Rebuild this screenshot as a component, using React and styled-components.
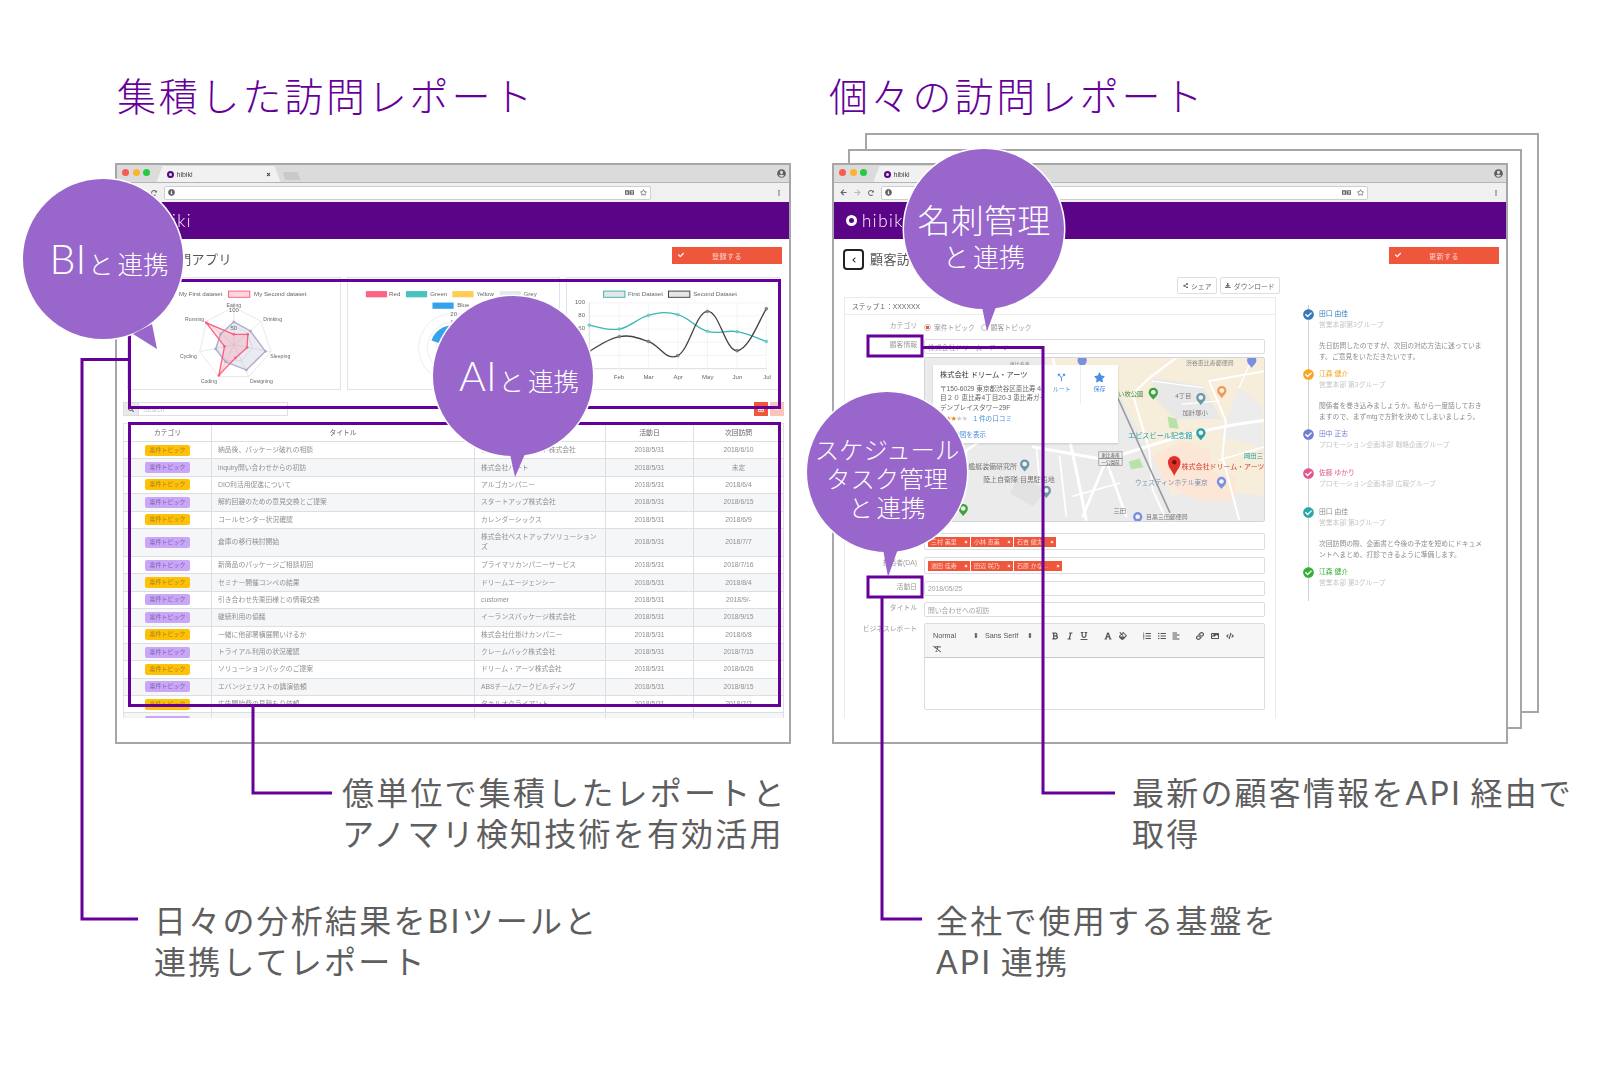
import React from "react";
import styled, { createGlobalStyle } from "styled-components";
import {
  FaArrowLeft,
  FaArrowRight,
  FaRedoAlt,
  FaInfoCircle,
  FaLanguage,
  FaRegStar,
  FaEllipsisV,
  FaUserCircle,
  FaCheck,
  FaShareAlt,
  FaDownload,
  FaSearch,
  FaChevronLeft,
  FaTimes,
  FaBold,
  FaItalic,
  FaUnderline,
  FaFont,
  FaFill,
  FaListOl,
  FaListUl,
  FaAlignLeft,
  FaLink,
  FaImage,
  FaCode,
  FaRemoveFormat,
  FaStar,
  FaCheckCircle,
  FaMinus,
  FaTable,
} from "react-icons/fa";
import { MdCallSplit } from "react-icons/md";

const PURPLE = "#660099";
const BRAND = "#5b0487";
const BUBBLE = "#9966cb";
const CORAL = "#ee573b";
const BIG_FONT = '"Lato", "Noto Sans CJK JP", sans-serif';
const APP_FONT = '"Liberation Sans", "Noto Sans CJK JP", sans-serif';

const GlobalStyle = createGlobalStyle`
  html, body {
    margin: 0;
    padding: 0;
    background: #fff;
  }
`;

const Page = styled.div`
  position: relative;
  width: 1600px;
  height: 1066px;
  overflow: hidden;
  background: #fff;
  font-family: ${BIG_FONT};
`;

const Columns = styled.div`
  display: grid;
  grid-template-columns: 717px 1fr;
  padding-left: 115px;
`;

const Column = styled.section`
  display: flex;
  flex-direction: column;
`;

const Heading = styled.h1`
  box-sizing: border-box;
  height: 163px;
  margin: 0 0 0 ${(p) => p.$shift || 0}px;
  padding: 74px 0 0 2px;
  font-size: 39px;
  line-height: 44px;
  font-weight: 300;
  letter-spacing: 2.8px;
  color: ${PURPLE};
`;

const WindowStack = styled.div`
  position: relative;
  isolation: isolate;
  width: 676px;
  height: 581px;
`;

const BackSheet = styled.div`
  position: absolute;
  z-index: -1;
  left: ${(p) => p.$left}px;
  top: ${(p) => p.$top}px;
  box-sizing: border-box;
  width: 674px;
  height: 580px;
  background: #fff;
  border: 2px solid #a6a6a9;
`;

const Window = styled.div`
  box-sizing: border-box;
  width: 676px;
  height: 581px;
  background: #fff;
  border: 2px solid #a6a6a9;
  font-family: ${APP_FONT};
  filter: blur(0.4px);
`;

const TitleBar = styled.div`
  position: relative;
  display: flex;
  align-items: flex-end;
  height: 17px;
  padding-left: 5px;
  background: #dbdbdb;
  border-bottom: 1px solid #b5b5b5;
`;

const Light = styled.span`
  width: 7px;
  height: 7px;
  margin: 0 3.5px 6px 0;
  border-radius: 50%;
  background: ${(p) => p.$color};
`;

const Tab = styled.div`
  display: flex;
  align-items: center;
  justify-content: space-between;
  box-sizing: border-box;
  width: 124px;
  height: 16px;
  margin-left: 3px;
  padding: 0 10px 0 10px;
  background: #f1f1f1;
  clip-path: polygon(0 100%, 6px 0, calc(100% - 6px) 0, 100% 100%);
  font-size: 7px;
  color: #444;
`;

const TabLabel = styled.span`
  display: flex;
  align-items: center;
  gap: 3px;
`;

const TabLogo = styled.span`
  box-sizing: border-box;
  width: 7px;
  height: 7px;
  border-radius: 50%;
  border: 2px solid ${BRAND};
  background: #ddd;
`;

const NewTab = styled.div`
  width: 18px;
  height: 8px;
  margin: 0 0 2px 2px;
  background: #c9c9c9;
  clip-path: polygon(3px 100%, 0 0, calc(100% - 3px) 0, 100% 100%);
`;

const Profile = styled.span`
  position: absolute;
  right: 3px;
  top: 4px;
  color: #5d5d5d;
  font-size: 9px;
  line-height: 0;
`;

const Toolbar = styled.div`
  display: flex;
  align-items: center;
  height: 19px;
  padding-left: 6px;
  background: #f0f0f0;
  color: #666;
  font-size: 7px;
`;

const NavButtons = styled.div`
  display: flex;
  align-items: center;
  gap: 7px;
  width: 41px;
`;

const AddressBar = styled.div`
  display: flex;
  align-items: center;
  justify-content: space-between;
  box-sizing: border-box;
  width: 487px;
  height: 14px;
  padding: 0 3px 0 3px;
  background: #fff;
  border: 1px solid #cfcfcf;
  border-radius: 2px;
`;

const AddressIcons = styled.span`
  display: flex;
  gap: 6px;
  align-items: center;
`;

const MenuDots = styled.span`
  margin-left: auto;
  margin-right: 7px;
  line-height: 0;
`;

const BrandBar = styled.div`
  display: flex;
  align-items: center;
  gap: 5px;
  height: 37px;
  padding-left: 12px;
  background: ${BRAND};
  color: #fff;
  font-family: ${BIG_FONT};
  font-weight: 300;
  font-size: 17px;
  letter-spacing: 1.5px;
`;

const LogoRing = styled.span`
  box-sizing: border-box;
  width: 11px;
  height: 11px;
  border-radius: 50%;
  border: 3.5px solid #fff;
  background: ${BRAND};
`;

const Viewport = styled.div`
  height: 479px;
  overflow: hidden;
`;

const PageHead = styled.div`
  display: flex;
  justify-content: space-between;
  align-items: flex-start;
  height: 30px;
  padding: 8px 7px 0 9px;
`;

const PageTitle = styled.div`
  display: flex;
  align-items: center;
  gap: 6px;
  height: 22px;
  margin-left: ${(p) => p.$inset || 0}px;
  font-size: 13px;
  letter-spacing: 0.4px;
  color: #555;
`;

const BackButton = styled.span`
  display: flex;
  align-items: center;
  justify-content: center;
  box-sizing: border-box;
  width: 21px;
  height: 21px;
  margin-top: 3px;
  border: 2px solid #222;
  border-radius: 4px;
  color: #222;
  font-size: 6px;
`;

const SubmitButton = styled.div`
  position: relative;
  display: flex;
  align-items: center;
  justify-content: center;
  width: 110px;
  height: 17px;
  background: ${CORAL};
  color: #fbd5cc;
  font-size: 7px;
  letter-spacing: 0.5px;
  svg {
    position: absolute;
    left: 6px;
    top: 5px;
    width: 6px;
    height: 6px;
    color: #fff;
  }
`;

const ListPane = styled.div`
  padding: 0 5px 0 6px;
`;

const ChartRow = styled.div`
  display: flex;
  gap: 6px;
  padding: 0 4px 0 4px;
`;

const ChartCard = styled.div`
  flex: 1;
  height: 113px;
  border: 1px solid #e2e2e8;
  box-sizing: border-box;
  svg {
    display: block;
    width: 100%;
    height: 100%;
  }
  text {
    font-family: ${APP_FONT};
    fill: #666;
  }
`;

const SearchRow = styled.div`
  display: flex;
  align-items: center;
  height: 14px;
  margin-top: 12px;
`;

const SearchAddon = styled.span`
  display: flex;
  align-items: center;
  justify-content: center;
  width: 16px;
  height: 14px;
  background: #e9e9ec;
  color: #666;
  font-size: 6px;
  border: 1px solid #ddd;
  box-sizing: border-box;
`;

const SearchInput = styled.span`
  box-sizing: border-box;
  width: 149px;
  height: 14px;
  padding: 2px 4px;
  border: 1px solid #dfdfe3;
  border-left: 0;
  font-size: 6.8px;
  line-height: 9px;
  color: #c8c8c8;
`;

const SquareButton = styled.span`
  display: flex;
  align-items: center;
  justify-content: center;
  width: 14px;
  height: 14px;
  margin-left: ${(p) => (p.$push ? "auto" : "2px")};
  background: ${(p) => (p.$soft ? "#f9c5ba" : CORAL)};
  color: #fff;
  font-size: 6px;
`;

const ReportTable = styled.table`
  width: 660px;
  margin-top: 7px;
  border-collapse: collapse;
  table-layout: fixed;
  font-size: 6.8px;
  line-height: 10px;
  color: #909090;
  border-top: 1px solid #e4e4e8;
  border-left: 1px solid #e4e4e8;

  th {
    height: 17px;
    font-weight: 400;
    color: #666;
    text-align: center;
    border-right: 1px solid #dcdee2;
    border-bottom: 1px solid #dcdee2;
    padding: 0;
  }
`;

const Row = styled.tr`
  background: ${(p) => (p.$striped ? "#f5f6f8" : "#fff")};
`;

const Cell = styled.td`
  height: ${(p) => (p.$tall ? 27 : 16.4)}px;
  padding: 0 6px;
  text-align: ${(p) => (p.$center ? "center" : "left")};
  border-right: 1px solid #dcdee2;
  border-bottom: 1px solid #dcdee2;
`;

const Badge = styled.span`
  display: inline-block;
  width: 45px;
  height: 11px;
  border-radius: 2px;
  line-height: 11px;
  font-size: 6px;
  text-align: center;
  vertical-align: middle;
  color: ${(p) => (p.$tone === "gold" ? "#a8801a" : "#7d66a8")};
  background: ${(p) => (p.$tone === "gold" ? "#ffc107" : "#c9a6f7")};
`;

const DetailLayout = styled.div`
  display: grid;
  grid-template-columns: 446px 1fr;
  padding-left: 10px;
`;

const ShareRow = styled.div`
  display: flex;
  justify-content: flex-end;
  gap: 3px;
  height: 20px;
  padding-right: 10px;
`;

const ShareButton = styled.span`
  display: flex;
  align-items: center;
  justify-content: center;
  gap: 3px;
  box-sizing: border-box;
  width: ${(p) => p.$width}px;
  height: 17px;
  background: #fff;
  border: 1px solid #dedede;
  border-radius: 2px;
  font-size: 6.8px;
  color: #666;
  svg {
    width: 5.5px;
    height: 5.5px;
  }
`;

const FormCard = styled.div`
  box-sizing: border-box;
  width: 432px;
  height: 430px;
  border: 1px solid #e9e9ee;
  border-bottom: 0;
`;

const FormHead = styled.div`
  box-sizing: border-box;
  height: 17px;
  padding: 4px 7px;
  border-bottom: 1px solid #ececf0;
  font-size: 6.8px;
  line-height: 9px;
  color: #666;
`;

const FormRow = styled.div`
  display: grid;
  grid-template-columns: 72px 341px;
  column-gap: 7px;
  margin-top: ${(p) => p.$gap}px;
`;

const FieldLabel = styled.span`
  padding-top: 1px;
  font-size: 6.8px;
  line-height: 10px;
  text-align: right;
  color: #9a9a9a;
`;

const Field = styled.div`
  box-sizing: border-box;
  display: flex;
  align-items: center;
  gap: 1px;
  height: ${(p) => p.$height}px;
  padding: 0 3px;
  border: 1px solid #dcdde2;
  border-radius: 2px;
  font-size: 6.8px;
  color: #a2a2a2;
`;

const RadioGroup = styled.div`
  display: flex;
  align-items: center;
  gap: 3px;
  height: 14px;
  font-size: 6.8px;
  color: #999;
`;

const Radio = styled.span`
  box-sizing: border-box;
  width: 7px;
  height: 7px;
  margin-left: ${(p) => (p.$spaced ? 3 : 0)}px;
  border-radius: 50%;
  border: 1px solid #bbb;
  background: ${(p) => (p.$on ? `radial-gradient(circle, ${CORAL} 45%, #fff 50%)` : "#fff")};
`;

const MapFrame = styled.div`
  position: relative;
  box-sizing: border-box;
  height: 165px;
  border: 1px solid #d6d6da;
  border-radius: 2px;
  overflow: hidden;
  svg {
    display: block;
    width: 100%;
    height: 100%;
  }
  text {
    font-family: ${APP_FONT};
  }
`;

const MapPopup = styled.div`
  position: absolute;
  left: 8px;
  top: 7px;
  display: flex;
  width: 185px;
  height: 78px;
  background: #fff;
  box-shadow: 0 1px 2px rgba(0, 0, 0, 0.15);
  color: #666;
  font-size: 6.6px;
  line-height: 9.6px;
  svg {
    height: auto;
  }
`;

const PlaceInfo = styled.div`
  box-sizing: border-box;
  width: 111px;
  padding: 5px 0 0 7px;
  white-space: nowrap;
  overflow: hidden;
`;

const PlaceName = styled.div`
  margin-bottom: 4px;
  font-size: 7.2px;
  color: #333;
`;

const Rating = styled.div`
  display: flex;
  align-items: center;
  gap: 6px;
  margin-top: 2px;
  color: #4a90e2;
`;

const Stars = styled.span`
  color: #ccc;
  font-size: 5.5px;
  letter-spacing: 0;
`;

const GoldStars = styled.span`
  color: #ef7d22;
`;

const MapLink = styled.div`
  margin-top: 6px;
  color: #4a90e2;
`;

const PlaceAction = styled.div`
  display: flex;
  flex-direction: column;
  align-items: center;
  gap: 2px;
  width: 37px;
  padding-top: 7px;
  height: 32px;
  color: #4a90e2;
  font-size: 6px;
  border-left: ${(p) => (p.$divided ? "1px solid #eee" : "0")};
  svg {
    width: 11px;
    height: 11px;
  }
`;

const Tag = styled.span`
  display: flex;
  align-items: center;
  justify-content: space-between;
  box-sizing: border-box;
  width: ${(p) => p.$width}px;
  height: 10px;
  padding: 0 2px 0 3px;
  background: ${CORAL};
  color: #fbd5cc;
  font-size: 6px;
  white-space: nowrap;
  svg {
    width: 4px;
    height: 4px;
    color: #fff;
  }
`;

const Editor = styled.div`
  box-sizing: border-box;
  height: 87px;
  border: 1px solid #dcdde2;
  border-radius: 2px;
`;

const EditorBar = styled.div`
  box-sizing: border-box;
  height: 34px;
  padding: 6px 0 0 8px;
  background: #f6f6f6;
  border-bottom: 1px solid #c9c9c9;
  color: #555;
`;

const EditorLine = styled.div`
  display: flex;
  align-items: center;
  height: 11px;
  font-size: 7.2px;
  margin-bottom: 2px;
  svg {
    width: 8px;
    height: 8px;
  }
`;

const Picker = styled.span`
  display: flex;
  justify-content: space-between;
  width: ${(p) => p.$width}px;
  margin-right: ${(p) => p.$after}px;
`;

const ToolGroup = styled.span`
  display: flex;
  align-items: center;
  gap: 6.7px;
  margin-right: 16px;
`;

const Timeline = styled.div`
  position: relative;
  margin: 28px 0 0 13px;
  padding: 3px 0 16px 16px;
  width: 180px;
  height: 277px;
  &::before {
    content: "";
    position: absolute;
    left: 5px;
    top: 0;
    bottom: 0;
    width: 1px;
    background: #cfcfcf;
  }
`;

const Entry = styled.div`
  position: relative;
  padding-bottom: ${(p) => (p.$plain ? 17 : 6)}px;
  font-size: 6.8px;
  line-height: 11px;
`;

const Dot = styled.span`
  position: absolute;
  left: -16px;
  top: 1px;
  width: 11px;
  height: 11px;
  border-radius: 50%;
  background: #fff;
  color: ${(p) => p.$color};
  line-height: 0;
  svg {
    width: 11px;
    height: 11px;
  }
`;

const EntryName = styled.div`
  color: ${(p) => p.$color};
`;

const EntryDept = styled.div`
  color: #c6c6c6;
`;

const EntryText = styled.div`
  margin-top: 10px;
  color: #8c8c8c;
`;

const Note = styled.p`
  margin: ${(p) => p.$gap}px 0 0 ${(p) => p.$indent}px;
  font-size: 32px;
  line-height: 41px;
  font-weight: 400;
  letter-spacing: 2.2px;
  word-spacing: -2px;
  color: #5e5e5e;
  white-space: nowrap;
`;

const Overlay = styled.svg`
  position: absolute;
  left: 0;
  top: 0;
  width: 1600px;
  height: 1066px;
  pointer-events: none;
`;

const Bubble = styled.div`
  position: absolute;
  left: ${(p) => p.$left}px;
  top: ${(p) => p.$top}px;
  display: flex;
  flex-direction: column;
  align-items: center;
  justify-content: center;
  box-sizing: border-box;
  width: 160px;
  height: 160px;
  padding-top: ${(p) => p.$drop || 0}px;
  border-radius: 50%;
  background: ${BUBBLE};
  box-shadow: 0 0 0 1.5px #fff;
  color: #fff;
  font-weight: 300;
  white-space: nowrap;
`;

const BubbleTail = styled.svg`
  position: absolute;
  left: 0;
  top: 0;
  width: 160px;
  height: 190px;
  overflow: visible;
`;

const BubbleLine = styled.span`
  position: relative;
  margin-left: ${(p) => p.$nudge || 0}px;
  font-size: ${(p) => p.$size}px;
  line-height: ${(p) => p.$lead}px;
  letter-spacing: ${(p) => p.$track || 0}px;
  word-spacing: -3px;
`;

const BubbleLatin = styled.span`
  font-size: 41px;
  margin-right: 2px;
`;

const LIST_ROWS = [
  ["gold", "納品後、パッケージ破れの相談", "アルファクライアント株式会社", "2018/6/10"],
  ["violet", "inquiry問い合わせからの初訪", "株式会社ハート", "未定"],
  ["gold", "DIO利活用促進について", "アルゴカンパニー", "2018/6/4"],
  ["violet", "解約回避のための意見交換とご提案", "スタートアップ株式会社", "2018/6/15"],
  ["gold", "コールセンター状況確認", "カレンダーシックス", "2018/6/9"],
  ["violet", "倉庫の移行検討開始", "株式会社ベストアップソリューションズ", "2018/7/7", true],
  ["violet", "新商品のパッケージご相談初回", "プライマリカンパニーサービス", "2018/7/16"],
  ["gold", "セミナー開催コンペの結果", "ドリームエージェンシー", "2018/8/4"],
  ["violet", "引き合わせ先栗田様との情報交換", "customer", "2018/9/-"],
  ["violet", "継続利用の協議", "イーランスパッケージ株式会社", "2018/9/15"],
  ["gold", "一緒に他部署横展開いけるか", "株式会社仕掛けカンパニー", "2018/6/8"],
  ["violet", "トライアル利用の状況確認", "クレームバック株式会社", "2018/7/15"],
  ["gold", "ソリューションパックのご提案", "ドリーム・アーツ株式会社", "2018/6/26"],
  ["violet", "エバンジェリストの講演依頼", "ABSチームワークビルディング", "2018/8/15"],
  ["gold", "広告開始費の見積もり依頼", "タキルオクライアント", "2018/7/2"],
  ["violet", "企業化済みのスキル更新", "リーナルト河城", "2018/7/5"],
];

const TIMELINE = [
  { name: "田口 由佳", dept: "営業本部第3グループ", color: "#337ab7", text: ["先日訪問したのですが、次回の対応方法に迷っていま", "す。ご意見をいただきたいです。"] },
  { name: "江森 健介", dept: "営業本部 第3グループ", color: "#f5a623", text: ["関係者を巻き込みましょうか。私から一度話しておき", "ますので、まずmtgで方針を決めてしまいましょう。"] },
  { name: "田中 正志", dept: "プロモーション企画本部 戦略企画グループ", color: "#6f7fd0" },
  { name: "佐藤 ゆかり", dept: "プロモーション企画本部 広報グループ", color: "#e0588f" },
  { name: "田口 由佳", dept: "営業本部 第3グループ", color: "#2aa8a8", nameColor: "#8c8c8c", text: ["次回訪問の際、企画書と今後の予定を短めにドキュメ", "ントへまとめ、打診できるように準備します。"] },
  { name: "江森 健介", dept: "営業本部 第3グループ", color: "#35b035" },
];

// Chart.js style spline through the points
const smooth = (pts) => {
  let d = `M${pts[0][0]} ${pts[0][1]}`;
  for (let i = 0; i < pts.length - 1; i++) {
    const p0 = pts[i - 1] || pts[i];
    const p1 = pts[i];
    const p2 = pts[i + 1];
    const p3 = pts[i + 2] || p2;
    const k = 0.2;
    d += ` C${p1[0] + (p2[0] - p0[0]) * k} ${p1[1] + (p2[1] - p0[1]) * k} ${p2[0] - (p3[0] - p1[0]) * k} ${p2[1] - (p3[1] - p1[1]) * k} ${p2[0]} ${p2[1]}`;
  }
  return d;
};

const poly = (pts) => pts.map((p) => p.join(",")).join(" ");

const RADAR_OUTER = [[700, 470], [782, 513], [812, 606], [745, 682], [655, 682], [597, 606], [618, 513]];
const RADAR_MID = RADAR_OUTER.map(([x, y]) => [(x + 700) / 2, (y + 585) / 2]);
const RADAR_GREY = [[700, 515], [750, 543], [795, 605], [738, 662], [675, 637], [645, 598], [660, 552]];
const RADAR_RED = [[700, 553], [742, 553], [740, 593], [705, 625], [655, 678], [672, 590], [617, 518]];

const RadarChart = () => (
  <svg viewBox="381 381 638 339" preserveAspectRatio="none">
    <rect x="684" y="421" width="64" height="19" fill="#fbd7de" stroke="#ff6384" strokeWidth="3" />
    <text x="600" y="436" fontSize="18.5" textAnchor="middle">My First dataset</text>
    <text x="840" y="436" fontSize="18.5" textAnchor="middle">My Second dataset</text>
    <polygon points={poly(RADAR_OUTER)} fill="none" stroke="#ddd" strokeWidth="2" />
    <polygon points={poly(RADAR_MID)} fill="none" stroke="#ddd" strokeWidth="2" />
    {RADAR_OUTER.map(([x, y]) => (
      <line key={x + "" + y} x1="700" y1="585" x2={x} y2={y} stroke="#ddd" strokeWidth="2" />
    ))}
    <polygon points={poly(RADAR_GREY)} fill="rgba(170,175,205,0.25)" stroke="#a9abc8" strokeWidth="4" />
    <polygon points={poly(RADAR_RED)} fill="rgba(255,99,132,0.2)" stroke="#ff5c7f" strokeWidth="4" />
    {RADAR_RED.map(([x, y]) => (
      <circle key={x} cx={x} cy={y} r="4" fill="#ff5c7f" />
    ))}
    {RADAR_GREY.map(([x, y]) => (
      <circle key={x} cx={x} cy={y} r="4" fill="#a9abc8" />
    ))}
    <g fontSize="15.5" textAnchor="middle">
      <text x="700" y="471">Eating</text>
      <text x="700" y="485" fontSize="18">100</text>
      <text x="700" y="539" fontSize="18">50</text>
      <text x="817" y="513">Drinking</text>
      <text x="840" y="626">Sleeping</text>
      <text x="783" y="701">Designing</text>
      <text x="625" y="701">Coding</text>
      <text x="563" y="626">Cycling</text>
      <text x="582" y="513">Running</text>
    </g>
  </svg>
);

const POLAR_LEGEND = [
  [-108, 421, "#ff6384", "Red", -21],
  [13, 421, "#4bc0c0", "Green", 112],
  [153, 421, "#ffcd56", "Yellow", 252],
  [296, 421, "#e4e7ed", "Grey", 388],
  [93, 456, "#36a2eb", "Blue", 186],
];

const PolarChart = () => (
  <svg viewBox="-162 381 639 339" preserveAspectRatio="none">
    {POLAR_LEGEND.map(([x, y, color, label, tx]) => (
      <g key={label}>
        <rect x={x} y={y} width="64" height="19" fill={color} />
        <text x={tx} y={y + 15} fontSize="18.5" textAnchor="middle">{label}</text>
      </g>
    ))}
    {[105, 78, 52, 26].map((r) => (
      <circle key={r} cx="156" cy="594" r={r} fill="none" stroke="#e4e4e4" strokeWidth="2" />
    ))}
    <path d="M156 594 L90 572 A69 69 0 0 1 156 525 Z" fill="#36a2eb" />
    <text x="157" y="496" fontSize="18" textAnchor="middle">20</text>
    <text x="157" y="522" fontSize="18" textAnchor="middle">15</text>
  </svg>
);

const TEAL_LINE = [[565, 525], [655, 537], [743, 495], [831, 493], [920, 544], [1009, 545], [1097, 575]];
const DARK_LINE = [[565, 605], [655, 560], [743, 575], [831, 618], [920, 483], [1009, 603], [1097, 475]];

const LineChart = () => (
  <svg viewBox="498 381 636 339" preserveAspectRatio="none">
    <rect x="608" y="421" width="64" height="19" fill="#e6e6e6" stroke="#3bb5b5" strokeWidth="3" />
    <text x="734" y="436" fontSize="18.5" textAnchor="middle">First Dataset</text>
    <rect x="803" y="421" width="64" height="19" fill="#e6e6e6" stroke="#444" strokeWidth="3" />
    <text x="943" y="436" fontSize="18.5" textAnchor="middle">Second Dataset</text>
    {[457, 497, 537, 577, 617, 658].map((y) => (
      <line key={y} x1="558" y1={y} x2="1097" y2={y} stroke={y === 658 ? "#ccc" : "#eee"} strokeWidth="2" />
    ))}
    {[565, 655, 743, 831, 920, 1009, 1097].map((x) => (
      <line key={x} x1={x} y1="457" x2={x} y2="666" stroke={x === 565 ? "#ccc" : "#eee"} strokeWidth="2" />
    ))}
    <g fontSize="18" textAnchor="end">
      <text x="552" y="461">100</text>
      <text x="552" y="501">80</text>
      <text x="552" y="541">60</text>
      <text x="552" y="581">40</text>
    </g>
    <g fontSize="18" textAnchor="middle">
      {["Jan", "Feb", "Mar", "Apr", "May", "Jun", "Jul"].map((m, i) => (
        <text key={m} x={565 + i * 89} y="689">{m}</text>
      ))}
    </g>
    <path d={smooth(TEAL_LINE)} fill="none" stroke="#3bb5b5" strokeWidth="4" />
    <path d={smooth(DARK_LINE)} fill="none" stroke="#444" strokeWidth="4" />
    {TEAL_LINE.map(([x, y]) => (
      <circle key={x} cx={x} cy={y} r="4.5" fill="#7ccfcf" stroke="#3bb5b5" />
    ))}
    {DARK_LINE.map(([x, y]) => (
      <circle key={x} cx={x} cy={y} r="4.5" fill="#888" stroke="#444" />
    ))}
  </svg>
);

const MapPin = ({ x, y, color, glyph }) => (
  <g transform={`translate(${x} ${y})`}>
    <path d="M0 20 C-5 12 -14 7 -14 -3 A14 14 0 1 1 14 -3 C14 7 5 12 0 20 Z" fill={color} />
    <circle cx="0" cy="-3" r="7" fill="#fff" opacity={glyph ? 0.9 : 0} />
  </g>
);

const MapDrawing = () => (
  <svg viewBox="15 20 1020 495" preserveAspectRatio="none">
    <rect x="15" y="20" width="1020" height="495" fill="#ebebeb" />
    <polygon points="380,20 1035,20 1035,470 900,470 760,440 690,300 600,130 380,130" fill="#f6edda" />
    <polygon points="700,80 850,105 905,205 770,205 705,140" fill="#e8e8e8" />
    <polygon points="960,110 1030,170 1030,290 905,260 930,190" fill="#ececec" />
    <polygon points="820,410 1035,440 1035,515 790,515 760,440" fill="#ebebeb" />
    <polygon points="700,320 790,270 870,300 880,370 950,380 950,450 880,455 800,440 740,400" fill="#fce7d6" />
    <polygon points="745,198 772,205 778,235 750,232" fill="#b9e2a6" />
    <polygon points="628,335 660,325 672,352 635,358" fill="#b9e2a6" />
    <polygon points="300,380 380,420 340,470 270,430" fill="#e2e2e2" />
    <g fill="none" stroke="#fff" strokeLinecap="round">
      <path d="M400 20 L420 130 L470 360 L500 510" strokeWidth="9" />
      <path d="M15 480 C120 420 130 350 140 300 L200 260" strokeWidth="7" />
      <path d="M1035 210 C900 225 760 260 560 330 L340 290" strokeWidth="9" />
      <path d="M560 330 L620 500 M560 330 L490 500" strokeWidth="8" />
      <path d="M640 130 L690 300 L700 420 L740 510" strokeWidth="6" />
      <path d="M1035 60 L870 90 L920 210 L910 320 L960 510" strokeWidth="6" />
      <path d="M770 20 L690 80 L640 130" strokeWidth="7" />
      <path d="M420 320 L440 500 M350 290 L360 400 M600 400 L460 440 M900 330 L1035 290" strokeWidth="5" />
      <path d="M700 90 L850 110 M790 160 L900 150 M1000 20 L960 110" strokeWidth="4" />
    </g>
    <line x1="590" y1="130" x2="752" y2="490" stroke="#9b9b9b" strokeWidth="5" />
    <MapPin x={908} y={122} color="#f29a5a" glyph />
    <MapPin x={702} y={127} color="#3ea33e" glyph />
    <MapPin x={845} y={143} color="#6e97a8" glyph />
    <MapPin x={845} y={250} color="#29a0a8" glyph />
    <MapPin x={315} y={345} color="#6e97a8" glyph />
    <MapPin x={380} y={425} color="#6e97a8" glyph />
    <MapPin x={130} y={480} color="#3ea33e" glyph />
    <MapPin x={907} y={398} color="#7b8fe0" glyph />
    <MapPin x={655} y={505} color="#7b8fe0" glyph />
    <MapPin x={488} y={30} color="#7b8fe0" />
    <MapPin x={998} y={30} color="#7b8fe0" />
    <g transform="translate(765 338) scale(1.35)">
      <path d="M0 30 C-4 18 -14 12 -14 -1 A14 14 0 1 1 14 -1 C14 12 4 18 0 30 Z" fill="#e0322c" />
      <circle cx="0" cy="-1" r="5" fill="#7c0f0c" />
    </g>
    <g fontSize="19">
      <text x="270" y="43" fill="#777" fontSize="15">恵比寿南</text>
      <text x="800" y="40" fill="#8a8a8a" fontSize="18">渋谷恵比寿郵便局</text>
      <text x="596" y="136" fill="#3d8f3d">い枚公園</text>
      <text x="768" y="143" fill="#777">4丁目</text>
      <text x="790" y="193" fill="#777">加計塚小</text>
      <text x="626" y="262" fill="#259da3" fontSize="21.5">エビスビール記念館</text>
      <text x="975" y="325" fill="#259da3">岡田三</text>
      <text x="787" y="357" fill="#d33a32" fontSize="21">株式会社ドリーム・アーツ</text>
      <text x="647" y="406" fill="#7d8fb0" fontSize="20">ウェスティンホテル東京</text>
      <text x="145" y="356" fill="#777" fontSize="21">艦艇装備研究所</text>
      <text x="190" y="396" fill="#777" fontSize="21">陸上自衛隊 目黒駐屯地</text>
      <text x="582" y="492" fill="#777">三田</text>
      <text x="680" y="510" fill="#777" fontSize="18">目黒三田郵便局</text>
    </g>
    <rect x="538" y="305" width="70" height="21" fill="#eee" stroke="#666" strokeWidth="1.5" />
    <rect x="538" y="326" width="70" height="21" fill="#eee" stroke="#666" strokeWidth="1.5" />
    <text x="573" y="320" fontSize="14" fill="#555" textAnchor="middle">恵比寿南</text>
    <text x="573" y="341" fontSize="14" fill="#555" textAnchor="middle">一公園前</text>
  </svg>
);

const BrowserChrome = () => (
  <>
    <TitleBar>
      <Light $color="#fb5b52" />
      <Light $color="#fdb32d" />
      <Light $color="#28c941" />
      <Tab>
        <TabLabel>
          <TabLogo />
          hibiki
        </TabLabel>
        <FaTimes size={5} />
      </Tab>
      <NewTab />
      <Profile>
        <FaUserCircle />
      </Profile>
    </TitleBar>
    <Toolbar>
      <NavButtons>
        <FaArrowLeft size={7} />
        <FaArrowRight size={7} color="#bbb" />
        <FaRedoAlt size={6} />
      </NavButtons>
      <AddressBar>
        <FaInfoCircle size={7} />
        <AddressIcons>
          <FaLanguage size={9} />
          <FaRegStar size={7} />
        </AddressIcons>
      </AddressBar>
      <MenuDots>
        <FaEllipsisV size={6} />
      </MenuDots>
    </Toolbar>
    <BrandBar>
      <LogoRing />
      hibiki
    </BrandBar>
  </>
);

const ListWindow = () => (
  <Window>
    <BrowserChrome />
    <Viewport>
      <PageHead>
        <PageTitle $inset={12}>営業部門アプリ</PageTitle>
        <SubmitButton>
          <FaCheck />
          登録する
        </SubmitButton>
      </PageHead>
      <ListPane>
        <ChartRow>
          <ChartCard><RadarChart /></ChartCard>
          <ChartCard><PolarChart /></ChartCard>
          <ChartCard><LineChart /></ChartCard>
        </ChartRow>
        <SearchRow>
          <SearchAddon><FaSearch /></SearchAddon>
          <SearchInput>Search</SearchInput>
          <SquareButton $push><FaTable /></SquareButton>
          <SquareButton $soft><FaMinus /></SquareButton>
        </SearchRow>
        <ReportTable>
          <colgroup>
            <col style={{ width: 88 }} />
            <col style={{ width: 263 }} />
            <col style={{ width: 131 }} />
            <col style={{ width: 88 }} />
            <col style={{ width: 90 }} />
          </colgroup>
          <thead>
            <tr>
              <th>カテゴリ</th>
              <th>タイトル</th>
              <th>顧客</th>
              <th>活動日</th>
              <th>次回訪問</th>
            </tr>
          </thead>
          <tbody>
            {LIST_ROWS.map(([tone, title, client, next, tall], i) => (
              <Row key={title} $striped={i % 2 === 1}>
                <Cell $center $tall={tall}><Badge $tone={tone}>案件トピック</Badge></Cell>
                <Cell>{title}</Cell>
                <Cell>{client}</Cell>
                <Cell $center>2018/5/31</Cell>
                <Cell $center>{next}</Cell>
              </Row>
            ))}
          </tbody>
        </ReportTable>
      </ListPane>
    </Viewport>
  </Window>
);

const DetailWindow = () => (
  <Window>
    <BrowserChrome />
    <Viewport>
      <PageHead>
        <PageTitle>
          <BackButton><FaChevronLeft /></BackButton>
          顧客訪問レポート
        </PageTitle>
        <SubmitButton>
          <FaCheck />
          更新する
        </SubmitButton>
      </PageHead>
      <DetailLayout>
        <div>
          <ShareRow>
            <ShareButton $width={40}><FaShareAlt />シェア</ShareButton>
            <ShareButton $width={60}><FaDownload />ダウンロード</ShareButton>
          </ShareRow>
          <FormCard>
            <FormHead>ステップ１：XXXXXX</FormHead>
            <FormRow $gap={5}>
              <FieldLabel>カテゴリ</FieldLabel>
              <RadioGroup>
                <Radio $on />案件トピック
                <Radio $spaced />顧客トピック
              </RadioGroup>
            </FormRow>
            <FormRow $gap={5}>
              <FieldLabel>顧客情報</FieldLabel>
              <Field $height={15}>株式会社ドリーム・アーツ</Field>
            </FormRow>
            <FormRow $gap={3}>
              <span />
              <MapFrame>
                <MapDrawing />
                <MapPopup>
                  <PlaceInfo>
                    <PlaceName>株式会社 ドリーム・アーツ</PlaceName>
                    〒150-6029 東京都渋谷区恵比寿４丁<br />
                    目２０ 恵比寿4丁目20-3 恵比寿ガー<br />
                    デンプレイスタワー29F
                    <Rating>
                      <Stars><GoldStars>★★★</GoldStars>★★</Stars>
                      1 件の口コミ
                    </Rating>
                    <MapLink>拡大地図を表示</MapLink>
                  </PlaceInfo>
                  <PlaceAction><MdCallSplit />ルート</PlaceAction>
                  <PlaceAction $divided><FaStar />保存</PlaceAction>
                </MapPopup>
              </MapFrame>
            </FormRow>
            <FormRow $gap={11}>
              <FieldLabel>担当者(BP)</FieldLabel>
              <Field $height={17}>
                <Tag $width={42}>三村 美里<FaTimes /></Tag>
                <Tag $width={42}>小林 恵美<FaTimes /></Tag>
                <Tag $width={42}>石吉 健太<FaTimes /></Tag>
              </Field>
            </FormRow>
            <FormRow $gap={7}>
              <FieldLabel>担当者(DA)</FieldLabel>
              <Field $height={17}>
                <Tag $width={42}>濱田 佳寿<FaTimes /></Tag>
                <Tag $width={42}>田辺 咲乃<FaTimes /></Tag>
                <Tag $width={48}>石原 かな…<FaTimes /></Tag>
              </Field>
            </FormRow>
            <FormRow $gap={7}>
              <FieldLabel>活動日</FieldLabel>
              <Field $height={15}>2018/05/25</Field>
            </FormRow>
            <FormRow $gap={6}>
              <FieldLabel>タイトル</FieldLabel>
              <Field $height={15}>問い合わせへの初訪</Field>
            </FormRow>
            <FormRow $gap={6}>
              <FieldLabel>ビジネスレポート</FieldLabel>
              <Editor>
                <EditorBar>
                  <EditorLine>
                    <Picker $width={46} $after={6}>Normal<span>⬍</span></Picker>
                    <Picker $width={48} $after={18}>Sans Serif<span>⬍</span></Picker>
                    <ToolGroup>
                      <FaBold /><FaItalic /><FaUnderline />
                    </ToolGroup>
                    <ToolGroup>
                      <FaFont /><FaFill />
                    </ToolGroup>
                    <ToolGroup>
                      <FaListOl /><FaListUl /><FaAlignLeft />
                    </ToolGroup>
                    <ToolGroup>
                      <FaLink /><FaImage /><FaCode />
                    </ToolGroup>
                  </EditorLine>
                  <EditorLine><FaRemoveFormat /></EditorLine>
                </EditorBar>
              </Editor>
            </FormRow>
            <FormRow $gap={8}>
              <FieldLabel>評価</FieldLabel>
              <Field $height={15} />
            </FormRow>
          </FormCard>
        </div>
        <Timeline>
          {TIMELINE.map((item) => (
            <Entry key={item.dept + item.color} $plain={!item.text}>
              <Dot $color={item.color}><FaCheckCircle /></Dot>
              <EntryName $color={item.nameColor || item.color}>{item.name}</EntryName>
              <EntryDept>{item.dept}</EntryDept>
              {item.text && (
                <EntryText>
                  {item.text[0]}<br />{item.text[1]}
                </EntryText>
              )}
            </Entry>
          ))}
        </Timeline>
      </DetailLayout>
    </Viewport>
  </Window>
);

// highlight frames and the leader lines that tie them to the notes
const AnnotationLines = () => (
  <Overlay viewBox="0 0 1600 1066">
    <g fill="none" stroke={PURPLE} strokeWidth="3">
      <rect x="129.5" y="280.5" width="650" height="127" />
      <rect x="129.5" y="423.5" width="650" height="282" />
      <rect x="868" y="336" width="54" height="20" />
      <rect x="868" y="577" width="54" height="20" />
      <polyline points="130,359.5 82,359.5 82,919 138,919" />
      <polyline points="253,705 253,793 332,793" />
      <polyline points="922,347.5 1043,347.5 1043,793 1115,793" />
      <polyline points="882,597 882,919 922,919" />
    </g>
  </Overlay>
);

const Callout = ({ left, top, drop, tail, children }) => (
  <Bubble $left={left} $top={top} $drop={drop}>
    {children}
    <BubbleTail viewBox="0 0 160 190">
      <polygon points={tail} fill={BUBBLE} />
    </BubbleTail>
  </Bubble>
);

export default function App() {
  return (
    <Page>
      <GlobalStyle />
      <Columns>
        <Column>
          <Heading>集積した訪問レポート</Heading>
          <WindowStack>
            <ListWindow />
          </WindowStack>
          <Note $gap={28} $indent={227}>
            億単位で集積したレポートと<br />アノマリ検知技術を有効活用
          </Note>
          <Note $gap={46} $indent={39}>
            日々の分析結果をBIツールと<br />連携してレポート
          </Note>
        </Column>
        <Column>
          <Heading $shift={-5}>個々の訪問レポート</Heading>
          <WindowStack>
            <BackSheet $left={33} $top={-30} />
            <BackSheet $left={16} $top={-14} />
            <DetailWindow />
          </WindowStack>
          <Note $gap={28} $indent={300}>
            最新の顧客情報をAPI 経由で<br />取得
          </Note>
          <Note $gap={46} $indent={104}>
            全社で使用する基盤を<br />API 連携
          </Note>
        </Column>
      </Columns>
      <AnnotationLines />
      <Callout left={23} top={179} drop={5} tail="110,155 129,145 134,170">
        <BubbleLine $nudge={12} $size={25.5} $lead={40}><BubbleLatin>BI</BubbleLatin>と 連携</BubbleLine>
      </Callout>
      <Callout left={433} top={296} drop={5} tail="77,158 92,158 82,181">
        <BubbleLine $nudge={12} $size={25.5} $lead={40}><BubbleLatin>AI</BubbleLatin>と 連携</BubbleLine>
      </Callout>
      <Callout left={904} top={149} drop={16} tail="78,158 92,158 83,182">
        <BubbleLine $size={33} $lead={40} $track={0.3}>名刺管理</BubbleLine>
        <BubbleLine $size={26} $lead={34}>と 連携</BubbleLine>
      </Callout>
      <Callout left={807} top={392} drop={14} tail="76,157 91,157 81,185">
        <BubbleLine $size={24.4} $lead={29}>スケジュール</BubbleLine>
        <BubbleLine $size={24.4} $lead={29}>タスク管理</BubbleLine>
        <BubbleLine $size={24.4} $lead={30}>と 連携</BubbleLine>
      </Callout>
    </Page>
  );
}
